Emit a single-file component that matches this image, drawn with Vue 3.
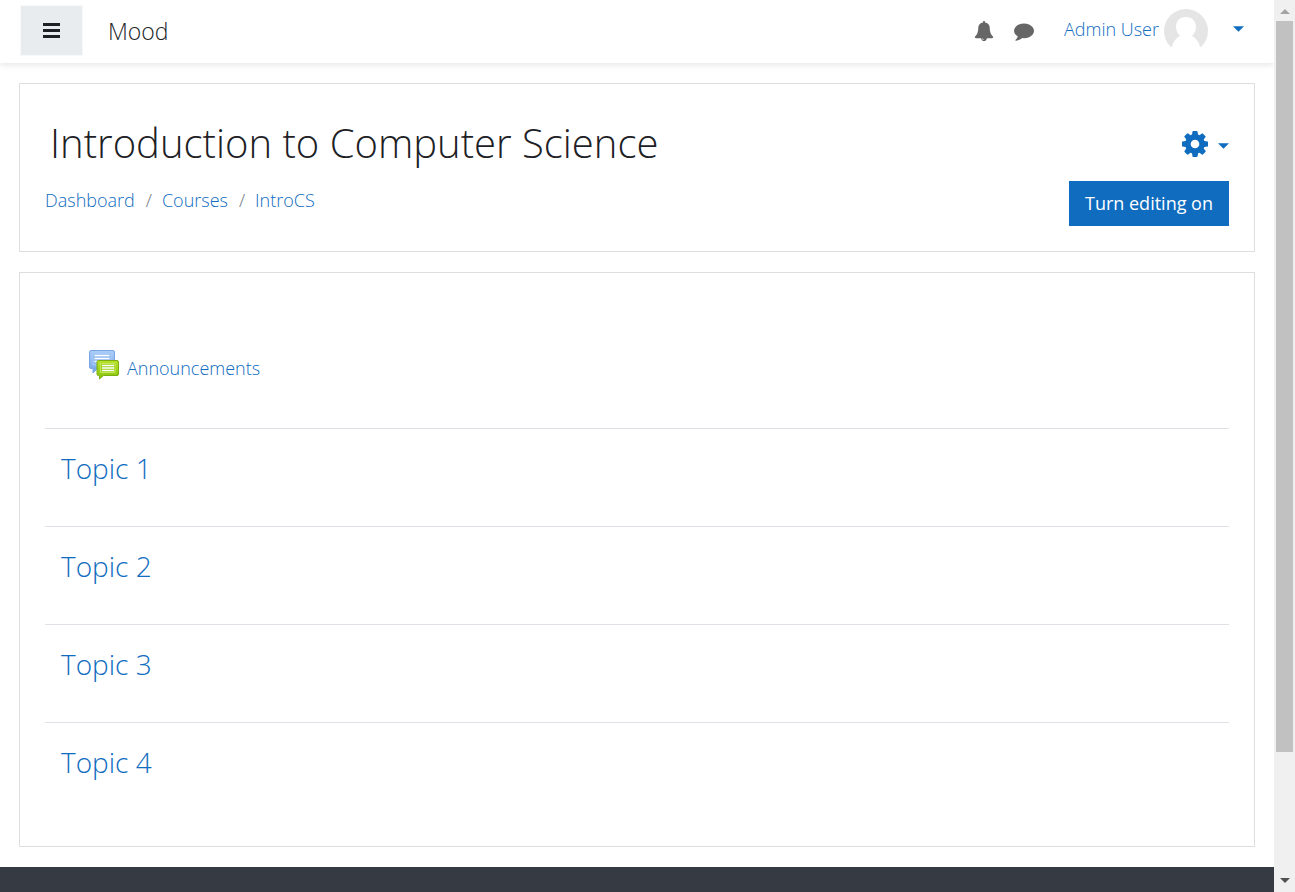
<script setup>
const crumbs = ['Dashboard', 'Courses', 'IntroCS']
const topics = ['Topic 1', 'Topic 2', 'Topic 3', 'Topic 4']
</script>

<template>
  <div class="shell">
    <div class="page">
      <header class="navbar">
        <button class="drawer" type="button" aria-label="Side panel">
          <svg viewBox="0 0 17 15" width="17" height="15"><path d="M0 0h17v3H0zM0 6h17v3H0zM0 12h17v3H0z" /></svg>
        </button>
        <a class="brand" href="#">Mood</a>
        <button class="tool" type="button" aria-label="Notifications">
          <svg viewBox="0 0 1792 1792" width="20" height="20"><path d="M912 1696q0-16-16-16-59 0-101.500-42.500t-42.500-101.500q0-16-16-16t-16 16q0 73 51.500 124.500t124.500 51.500q16 0 16-16zm816-288q0 52-38 90t-90 38h-448q0 106-75 181t-181 75-181-75-75-181h-448q-52 0-90-38t-38-90q50-42 91-88t85-119.500 74.500-158.500 50-206 19.500-260q0-152 117-282.500t307-158.500q-8-19-8-39 0-40 28-68t68-28 68 28 28 68q0 20-8 39 190 28 307 158.500t117 282.500q0 139 19.500 260t50 206 74.500 158.500 85 119.500 91 88z" /></svg>
        </button>
        <button class="tool" type="button" aria-label="Messages">
          <svg viewBox="0 0 1792 1792" width="20" height="20"><path d="M1792 896q0 174-120 321.500t-326 233-450 85.500q-70 0-145-8-198 175-460 225-49 9-114 16-17 2-30.500-9t-17.500-29v-1q-3-4-.5-12t2-10 4.500-9.500l6-9 7-8.500 8-9q7-8 31-34.500t34.500-38 31-39.500 32.500-51 27-59 26-76q-157-89-247.500-220t-90.500-281q0-174 120-321.500t326-233 450-85.500 450 85.500 326 233 120 321.500z" /></svg>
        </button>
        <button class="user" type="button">
          <span class="name">Admin User</span>
          <svg class="avatar" viewBox="0 0 44 44" width="44" height="44">
            <circle cx="22" cy="22" r="22" fill="#e5e5e5" />
            <path d="M0 38h8c1-5 4-9 8-11-2-2-4-5-4-9 0-6 4-10 10-10s10 4 10 10c0 4-2 7-4 9 4 2 7 6 8 11h8v6H0z" fill="#fff" />
          </svg>
          <svg class="caret" viewBox="0 0 12 6" width="11" height="6"><path d="M0 0h12L6 6z" /></svg>
        </button>
      </header>

      <main class="content">
        <section class="card course">
          <div class="headline">
            <h1>Introduction to Computer Science</h1>
            <button class="gear" type="button" aria-label="Course settings">
              <svg viewBox="128 128 1536 1536" width="26" height="26"><path d="M1152 896q0-106-75-181t-181-75-181 75-75 181 75 181 181 75 181-75 75-181zm512-109v222q0 12-8 23t-20 13l-185 28q-19 54-39 91 35 50 107 138 10 12 10 25t-9 23q-27 37-99 108t-94 71q-12 0-26-9l-138-108q-44 23-91 38-16 136-29 186-7 28-36 28h-222q-14 0-24.500-8.500t-11.500-21.500l-28-184q-49-16-90-37l-141 107q-10 9-25 9-14 0-25-11-126-114-165-168-7-10-7-23 0-12 8-23 15-21 51-66.500t54-70.500q-27-50-41-99l-183-27q-13-2-21-12.500t-8-23.500v-222q0-12 8-23t19-13l186-28q14-46 39-92-40-57-107-138-10-12-10-24 0-10 9-23 26-36 98.500-107.500t94.500-71.500q13 0 26 10l138 107q44-23 91-38 16-136 29-186 7-28 36-28h222q14 0 24.500 8.500t11.500 21.500l28 184q49 16 90 37l142-107q9-9 24-9 13 0 25 10 129 119 165 170 7 8 7 22 0 12-8 23-15 21-51 66.500t-54 70.500q26 50 41 98l183 28q13 2 21 12.500t8 23.500z" /></svg>
              <svg class="gear-caret" viewBox="0 0 12 6" width="11" height="6"><path d="M0 0h12L6 6z" /></svg>
            </button>
          </div>
          <div class="subline">
            <nav aria-label="Breadcrumb">
              <ol>
                <li v-for="c in crumbs" :key="c"><a href="#">{{ c }}</a></li>
              </ol>
            </nav>
            <button class="primary" type="button">Turn editing on</button>
          </div>
        </section>

        <section class="card sections">
          <div class="general">
            <a class="activity" href="#">
              <svg viewBox="0 0 32 32" width="32" height="32">
                <defs>
                  <linearGradient id="blue" x1="0" y1="0" x2="0" y2="1"><stop offset="0" stop-color="#a9cdf8" /><stop offset="1" stop-color="#75a4e6" /></linearGradient>
                  <linearGradient id="green" x1="0" y1="0" x2="0" y2="1"><stop offset="0" stop-color="#b9e02b" /><stop offset="1" stop-color="#86c40c" /></linearGradient>
                </defs>
                <path d="M3 1.500h22q1.500 0 1.500 1.500v15q0 1.500-1.500 1.500H9.500L5 24v-4.500H3Q1.500 19.500 1.500 18V3q0-1.500 1.500-1.500z" fill="url(#blue)" stroke="#7ba6e6" />
                <path d="M5 4.500h18v11.500H5z" fill="#8fb9f1" stroke="#a9cbf8" />
                <path d="M6.500 6.500h15M6.500 9.500h15M6.500 12.500h15" stroke="#fff" stroke-width="1.500" />
                <path d="M10.500 11.500h18.500q1.500 0 1.500 1.500v12q0 1.500-1.500 1.500H15.500l-4 3.500v-3.500h-1Q9 26.500 9 25V13q0-1.500 1.500-1.500z" fill="url(#green)" stroke="#7aae10" />
                <path d="M12.500 14.500h14.500v9H12.500z" fill="#9bd116" stroke="#c4e85a" />
                <path d="M14 16.500h12M14 19h12M14 21.500h12" stroke="#fff" stroke-width="1.300" />
              </svg>
              <span>Announcements</span>
            </a>
          </div>
          <div v-for="t in topics" :key="t" class="topic">
            <h3><a href="#">{{ t }}</a></h3>
          </div>
        </section>
      </main>
      <footer class="footer"></footer>
    </div>

    <div class="scrollbar" aria-hidden="true">
      <svg viewBox="0 0 21 21" width="21" height="21"><path d="M6 14h10l-5-5z" fill="#a3a3a3" /></svg>
      <div class="track"><div class="thumb"></div></div>
      <svg viewBox="0 0 21 21" width="21" height="21"><path d="M6 7h10l-5 5z" fill="#505050" /></svg>
    </div>
  </div>
</template>

<style>
body { background: #fff; }
</style>

<style scoped>
* { box-sizing: border-box; }
.shell { display: flex; height: 100vh; overflow: hidden; font: 350 18px/28px "Open Sans", "Noto Sans", sans-serif; color: #212529; }
.page { flex: 1; min-width: 0; display: flex; flex-direction: column; }
button { font: inherit; border: 0; background: none; padding: 0; cursor: pointer; }
a { color: #0f6cbf; text-decoration: none; }
svg { display: block; fill: currentColor; flex: none; }

.navbar { display: flex; align-items: center; height: 63px; flex: none; padding: 0 30px 2px 20px; box-shadow: 0 2px 6px rgba(0, 0, 0, .1); }
.drawer { display: flex; align-items: center; justify-content: center; width: 63px; height: 51px; color: #1d2125; background: #e9ecef; border: 1px solid #f8f9fa; }
.brand { margin: 0 auto 0 25px; color: #212529; font-size: 23px; }
.tool { color: #666; margin-right: 20px; }
.user { display: flex; align-items: center; color: #0f6cbf; margin-left: 10px; }
.name, .caret { margin-bottom: 4px; }
.avatar { margin: 0 25px 0 5px; }

.content { flex: none; display: flex; flex-direction: column; gap: 20px; padding: 20px 19px; }
.card { border: 1px solid #dedede; padding: 25px; }
.headline, .subline { display: flex; justify-content: space-between; }
.course { padding-top: 32px; }
.headline { align-items: center; }
h1 { margin: 0 0 2px 5px; font-size: 40px; line-height: 54px; font-weight: 300; color: #1d2125; }
.gear { display: flex; align-items: center; gap: 10px; color: #0f6cbf; }
.gear-caret { margin-top: 4px; }
.subline { margin-top: 9px; }
ol { display: flex; list-style: none; margin: 0; padding: 5px 0 0; }
li + li::before { content: "/"; padding: 0 10px 0 11px; color: #6c757d; }
.primary { height: 45px; padding: 0 16px 2px; font-weight: 400; color: #fff; background: #0f6cbf; }

.sections { padding-bottom: 26px; }
.general { padding: 51px 0 47px 43px; }
.activity { display: inline-flex; align-items: flex-end; gap: 7px; vertical-align: top; line-height: 26px; }
.topic { border-top: 1px solid #dee2e6; padding: 20px 16px 39px; }
h3 { margin: 0; font-size: 28px; line-height: 38px; font-weight: 300; }

.footer { flex: 1; background: #363a42; }
.scrollbar { width: 21px; flex: none; display: flex; flex-direction: column; background: #f0f0f0; }
.track { flex: 1; padding: 0 2px; }
.thumb { height: 86%; background: #c1c1c1; }
</style>
